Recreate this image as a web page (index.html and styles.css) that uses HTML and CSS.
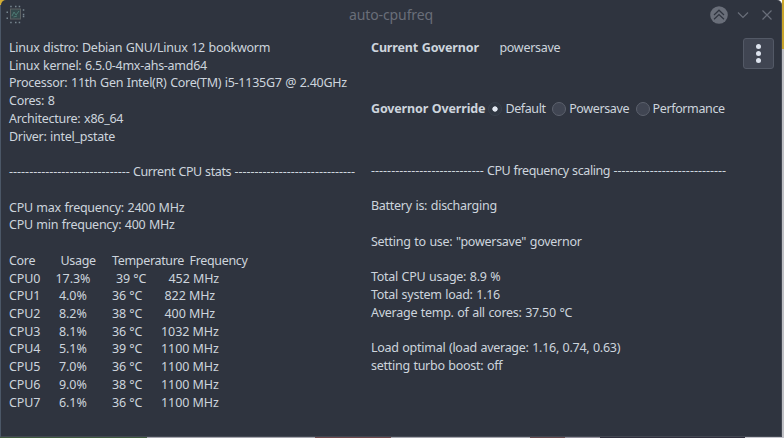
FILE: index.html
```
<!DOCTYPE html>
<html lang="en">
<head>
    <meta charset="UTF-8">
    <meta name="viewport" content="width=device-width, initial-scale=1.0">
    <title>auto-cpufreq</title>
    <link rel="stylesheet" href="styles.css">
</head>
<body>
    <div class="window">
        <header class="titlebar">
            <svg class="app-icon" width="20" height="20" viewBox="0 0 20 20">
                <rect x="4.500" y="4" width="10" height="10" fill="#34494c" stroke="#5d6163"/>
                <path d="M6 11l2-4 2 3 3-4M7.500 12l3.500-1" fill="none" stroke="#4d7b74"/>
                <path d="M4.200 1.500h1.500M9 1.500h1.500M12.700 1.500h1.500M4.200 17.500h1.500M9 17.500h1.500M12.700 17.500h1.500M0.500 7.300h1.500M0.500 13.300h1.500M16.800 5h1.500M16.800 9.500h1.500M16.800 11.500h1.500" stroke="#788791" stroke-width="1.500"/>
            </svg>
            <h1>auto-cpufreq</h1>
            <div class="controls">
                <svg width="18" height="18" viewBox="0 0 18 18">
                    <circle cx="9" cy="9" r="8.800" fill="#696e79"/>
                    <path d="M4 9l5-4.800 5 4.800M4 13.300l5-4.800 5 4.800" fill="none" stroke="#2f343f" stroke-width="1.200"/>
                </svg>
                <svg width="12" height="12" viewBox="0 0 12 12">
                    <path d="M1 3.500l5 5 5-5" fill="none" stroke="#696e79" stroke-width="1.200"/>
                </svg>
                <svg width="12" height="12" viewBox="0 0 12 12">
                    <path d="M1.500 1.500l9 9M10.500 1.500l-9 9" fill="none" stroke="#696e79" stroke-width="1.200"/>
                </svg>
            </div>
        </header>

        <main class="content">
            <section class="system">
                <pre class="info">Linux distro: Debian GNU/Linux 12 bookworm
Linux kernel: 6.5.0-4mx-ahs-amd64
Processor: 11th Gen Intel(R) Core(TM) i5-1135G7 @ 2.40GHz
Cores: 8
Architecture: x86_64
Driver: intel_pstate

<span class="rule">------------------------------<span class="name"> Current CPU stats </span>------------------------------</span>

CPU max frequency: 2400 MHz
CPU min frequency: 400 MHz
</pre>
                <div class="cores">
                    <div class="row head"><span>Core</span><span>Usage</span><span>Temperature</span><span>Frequency</span></div>
                    <div class="row first"><span>CPU0</span><span>17.3%</span><span>39 °C</span><span>452 MHz</span></div>
                    <div class="row"><span>CPU1</span><span>4.0%</span><span>36 °C</span><span>822 MHz</span></div>
                    <div class="row"><span>CPU2</span><span>8.2%</span><span>38 °C</span><span>400 MHz</span></div>
                    <div class="row wide"><span>CPU3</span><span>8.1%</span><span>36 °C</span><span>1032 MHz</span></div>
                    <div class="row wide"><span>CPU4</span><span>5.1%</span><span>39 °C</span><span>1100 MHz</span></div>
                    <div class="row wide"><span>CPU5</span><span>7.0%</span><span>36 °C</span><span>1100 MHz</span></div>
                    <div class="row wide"><span>CPU6</span><span>9.0%</span><span>38 °C</span><span>1100 MHz</span></div>
                    <div class="row wide"><span>CPU7</span><span>6.1%</span><span>36 °C</span><span>1100 MHz</span></div>
                </div>
            </section>

            <section class="governor">
                <div class="current"><b>Current Governor</b><span>powersave</span></div>
                <div class="override">
                    <b>Governor Override</b>
                    <label><input type="radio" name="governor" checked>Default</label>
                    <label><input type="radio" name="governor">Powersave</label>
                    <label><input type="radio" name="governor">Performance</label>
                </div>
                <pre class="info"><span class="rule">----------------------------<span class="name"> CPU frequency scaling </span>----------------------------</span>

Battery is: discharging

Setting to use: "powersave" governor

Total CPU usage: 8.9 %
Total system load: 1.16
Average temp. of all cores: 37.50 °C

Load optimal (load average: 1.16, 0.74, 0.63)
setting turbo boost: off</pre>
            </section>

            <button class="menu" aria-label="Menu"><i></i><i></i><i></i></button>
        </main>
    </div>
</body>
</html>
```
FILE: styles.css
```
* {
    box-sizing: border-box;
}
/* desktop showing round the edges of the window */
body {
    margin: 0;
    width: 784px;
    height: 438px;
    overflow: hidden;
    padding: 0 2px 1px 1px;
    background:
        linear-gradient(90deg, #3f5a3c 147px, #a6a6ae 147px 315px, #70484b 315px 391px, #a6a6ae 391px 530px, #65484c 530px 565px, #94909c 565px 600px, #302f3d 600px 745px, #c4c4cb 745px) 0 437px / 784px 1px no-repeat,
        linear-gradient(#c9a52b 49px, #bfc0c5 49px) 782px 0 / 2px 438px no-repeat,
        linear-gradient(#d3ad35 5px, #4b5767 5px) 0 0 / 6px 438px no-repeat;
    font-family: "Noto Sans", sans-serif;
    font-size: 12.5px;
    line-height: 17.73px;
    letter-spacing: -0.27px;
    word-spacing: 0.6px;
    color: #cdd4dd;
}
.window {
    height: 437px;
    background: #2f343f;
    border-radius: 5px 5px 0 0;
    border-right: 1px solid #434852;
    border-bottom: 1px solid #434852;
}
.titlebar {
    display: grid;
    grid-template-columns: 64px 1fr 64px;
    align-items: center;
    height: 30px;
    padding: 0 8px 0 5px;
}
h1 {
    margin: 0 0 0 3px;
    font-size: 14px;
    font-weight: normal;
    letter-spacing: -0.1px;
    text-align: center;
    color: #696e79;
}
.controls {
    display: flex;
    align-items: center;
    gap: 12px;
    justify-content: flex-end;
}
.controls svg {
    flex: none;
}
.controls svg:first-child {
    margin-right: -3px;
}
.content {
    display: flex;
    padding: 8px 8px 0;
}
.system {
    flex: none;
    width: 362px;
    padding-top: 1px;
}
.info {
    margin: 0;
    font: inherit;
}
.rule {
    letter-spacing: 0;
}
.name {
    letter-spacing: -0.4px;
    word-spacing: 0.4px;
}
.cores {
    margin-top: 17.73px;
}
.row {
    display: grid;
    grid-template-columns: 50px 53px 52.500px 1fr;
    white-space: nowrap;
    letter-spacing: -0.08px;
    word-spacing: 0;
}
.head {
    grid-template-columns: 51.500px 51.500px 77.500px 1fr;
    letter-spacing: -0.33px;
}
.first {
    grid-template-columns: 46.500px 60.500px 52.500px 1fr;
}
.wide {
    grid-template-columns: 50px 53px 49px 1fr;
}
.governor {
    flex: none;
    width: 372px;
    padding-top: 1px;
}
b {
    letter-spacing: -0.15px;
    white-space: nowrap;
}
.current {
    display: flex;
    gap: 20.500px;
}
.override {
    display: flex;
    align-items: center;
    margin: 43px 0 44.300px;
}
label {
    display: flex;
    align-items: center;
    margin-right: 6.500px;
    letter-spacing: -0.38px;
}
input {
    appearance: none;
    width: 14px;
    height: 14px;
    margin: 0 3px 0 0;
    border: 1px solid #5c616d;
    border-radius: 50%;
    background: #404552;
}
input:checked {
    border-color: #3a414d;
    background: radial-gradient(circle, #e3e8f2 2.300px, #303742 3px);
}
.override b {
    margin-right: 3px;
}
.menu {
    display: flex;
    flex-direction: column;
    align-items: center;
    justify-content: center;
    gap: 2px;
    flex: none;
    width: 31px;
    height: 31px;
    padding: 0;
    border: 1px solid #535966;
    border-radius: 3px;
    background: #404552;
}
.menu i {
    width: 5px;
    height: 5px;
    border-radius: 50%;
    background: #dde3ee;
}
```
